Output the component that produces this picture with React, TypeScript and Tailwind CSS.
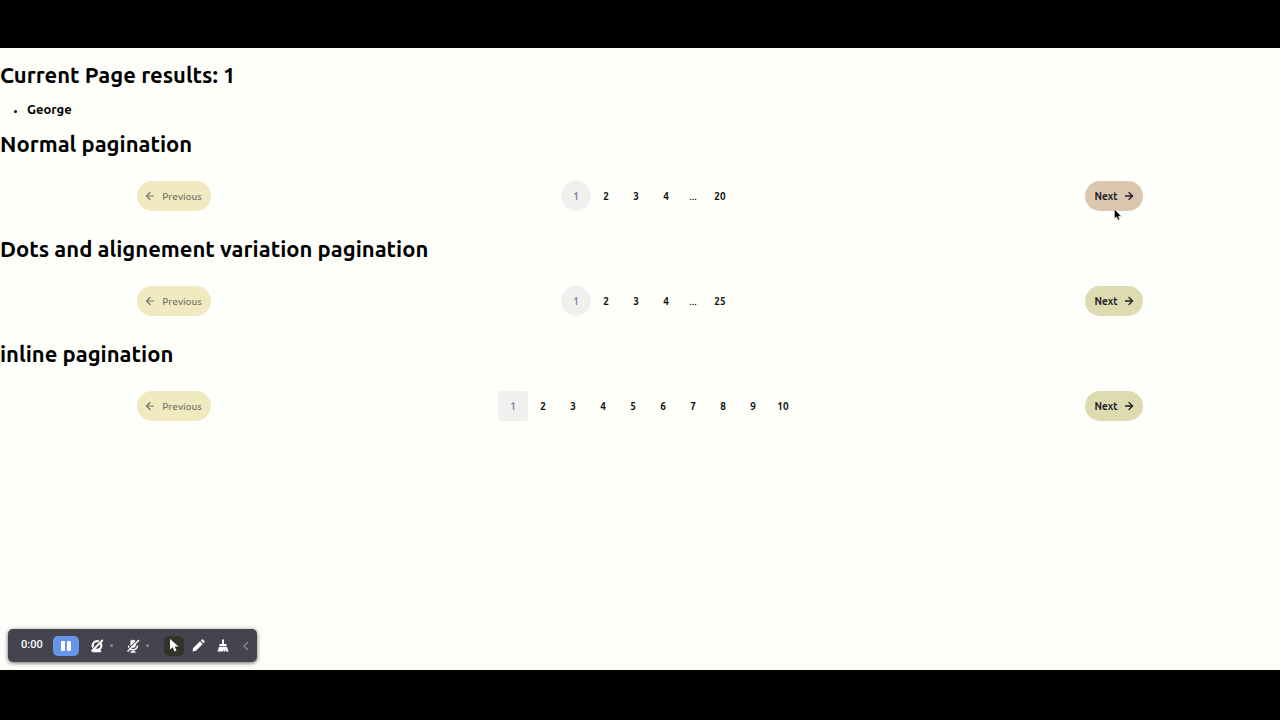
import React from "react";
import { ArrowLeft, ArrowRight } from "lucide-react";

type PagerProps = {
  label: string;
  pages: string[];
  square?: boolean;
  hovered?: boolean;
};

function Pager({ label, pages, square = false, hovered = false }: PagerProps) {
  return (
    <nav aria-label={label} className="my-[22px] flex h-[30px] items-center justify-between px-[137px]">
      <button disabled className="flex h-[30px] w-[74px] items-center justify-center gap-[6px] rounded-full bg-[#f1e9bf] pr-[2px] text-[10px] font-medium text-[#77746c]">
        <ArrowLeft size={12} strokeWidth={2.4} />
        Previous
      </button>
      <div className="flex items-center text-[10px] font-bold">
        {pages.map((page, index) =>
          page === "..." ? (
            <span key={page} className="w-6 text-center font-medium">...</span>
          ) : (
            <button
              key={page}
              aria-current={index === 0 ? "page" : undefined}
              className={`h-[30px] w-[30px] ${index === 0 ? "bg-[#f0f0ee] text-[#8f84a6]" : "text-[#111111]"} ${square ? "rounded-[3px]" : "rounded-full"}`}
            >
              {page}
            </button>
          ),
        )}
      </div>
      <div className="relative">
        <button className={`flex h-[30px] w-[58px] items-center justify-center gap-[6px] rounded-full pl-[2px] text-[10px] font-bold text-[#201c2a] ${hovered ? "bg-[#dbc7b0]" : "bg-[#dddbb0]"}`}>
          Next
          <ArrowRight size={12} strokeWidth={2.6} />
        </button>
        {hovered && (
          <svg className="absolute top-[28px] left-[29px]" width="8" height="12" viewBox="0 0 8 12" aria-hidden="true">
            <path d="M.5.5v9L2.6 7.7 4 11l1.7-.7L4.3 7.2h3Z" fill="#000" stroke="#fff" strokeWidth=".4" />
          </svg>
        )}
      </div>
    </nav>
  );
}

function Recorder() {
  return (
    <div className="absolute bottom-2 left-2 flex h-[33px] w-[249px] items-center rounded-[5px] bg-[#44444e] pl-[13px] text-white shadow-[0_1px_4px_rgba(0,0,0,0.6)]">
      <span className="w-8 font-[Roboto] text-[11px] font-medium">0:00</span>
      <button aria-label="Pause" className="flex h-5 w-[26px] items-center justify-center rounded-[5px] bg-[#6796e8]">
        <svg width="10" height="10" viewBox="0 0 10 10" fill="currentColor">
          <rect x="0" y="0" width="4" height="10" rx="1" />
          <rect x="6" y="0" width="4" height="10" rx="1" />
        </svg>
      </button>
      <button aria-label="Camera off" className="ml-[11px] flex h-5 w-[14px] items-center justify-center">
        <svg width="14" height="14" viewBox="0 0 14 14" fill="none">
          <circle cx="7" cy="6.5" r="4.3" stroke="currentColor" strokeWidth="2.2" />
          <path d="M2 13.2h9.5l-1-2.6h-6Z" fill="currentColor" />
          <path d="M2.4 10 11.4 1" stroke="#44444e" strokeWidth="1.2" />
          <path d="M1.5 12.3 12.8 1" stroke="currentColor" strokeWidth="1.8" />
        </svg>
      </button>
      <span className="ml-[6px] h-[3px] w-[3px] rounded-full bg-[#84848a]" />
      <button aria-label="Microphone off" className="ml-[13px] flex h-5 w-[14px] items-center justify-center">
        <svg width="14" height="14" viewBox="0 0 14 14" fill="none">
          <rect x="4.3" y=".8" width="5.4" height="8" rx="2.7" fill="currentColor" />
          <path d="M2.5 6.5c0 5.5 9 5.5 9 0M7 10.5V13M4.5 13h5" stroke="currentColor" strokeWidth="1.4" />
          <path d="M2 10.4 11.4 1" stroke="#44444e" strokeWidth="1.1" />
          <path d="M1.5 12.5 13 1" stroke="currentColor" strokeWidth="1.4" />
        </svg>
      </button>
      <span className="ml-[6px] h-[3px] w-[3px] rounded-full bg-[#84848a]" />
      <button aria-label="Pointer" className="ml-[15px] flex h-5 w-5 items-center justify-center rounded-[5px] bg-[#33332a]">
        <svg width="10" height="13" viewBox="0 0 10 13" fill="currentColor">
          <path d="M1 0v10.5l2.6-2.2L5.5 12.5l2-.9-1.8-4H9.5Z" />
        </svg>
      </button>
      <button aria-label="Draw" className="ml-2 flex h-5 w-[13px] items-center justify-center">
        <svg width="13" height="13" viewBox="0 0 13 13" fill="currentColor">
          <path d="M.5 12.5 1.2 9 8 2.3l2.7 2.7L4 11.8ZM8.8 1.5l.8-.8q.8-.7 1.6 0l1.1 1.1q.7.8 0 1.6l-.8.8Z" />
        </svg>
      </button>
      <button aria-label="Clear drawing" className="ml-3 flex h-5 w-3 items-center justify-center">
        <svg width="12" height="13" viewBox="0 0 12 13" fill="currentColor">
          <path d="M5 .5h2V5h2.5v2h-7V5H5ZM2 7.7h8l1.5 4.8H9L8.2 10v2.5H6.5V10l-.7 2.5H.5Z" />
        </svg>
      </button>
      <button aria-label="Collapse toolbar" className="ml-[11px] flex h-5 w-3 items-center justify-center text-[#85858a]">
        <svg width="6" height="10" viewBox="0 0 6 10" fill="none" stroke="currentColor" strokeWidth="1.4">
          <path d="M5 1 1 5l4 4" />
        </svg>
      </button>
    </div>
  );
}

const headingClass = "text-[22px] leading-[31px] font-bold";

export default function App() {
  return (
    <div className="flex min-h-screen flex-col bg-black pt-12 pb-[50px] font-['Ubuntu','Noto_Sans',sans-serif] text-black">
      <main className="relative flex-1 bg-[#fefefa] pt-[11px]">
        <h1 className={headingClass}>Current Page results: 1</h1>
        <ul className="my-[9px] list-disc pl-[27px] text-[13px] leading-5 font-bold marker:text-[11px]">
          <li>George</li>
        </ul>
        <h2 className={headingClass}>Normal pagination</h2>
        <Pager label="Normal pagination" pages={["1", "2", "3", "4", "...", "20"]} hovered />
        <h2 className={headingClass}>Dots and alignement variation pagination</h2>
        <Pager label="Dots pagination" pages={["1", "2", "3", "4", "...", "25"]} />
        <h2 className={headingClass}>inline pagination</h2>
        <Pager label="Inline pagination" pages={["1", "2", "3", "4", "5", "6", "7", "8", "9", "10"]} square />
        <Recorder />
      </main>
    </div>
  );
}
